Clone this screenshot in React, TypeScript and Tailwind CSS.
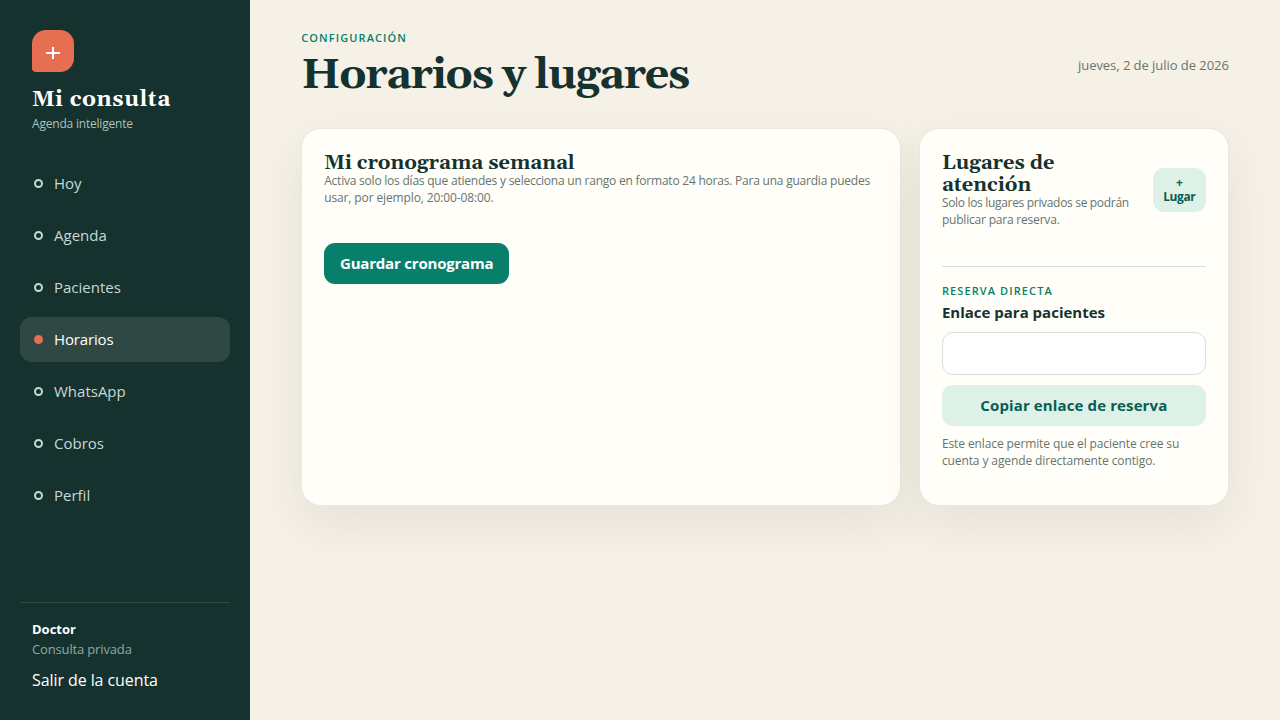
import { useState } from 'react';
import clsx from 'clsx';

const NAV_ITEMS = ['Hoy', 'Agenda', 'Pacientes', 'Horarios', 'WhatsApp', 'Cobros', 'Perfil'];

const serif = "font-['Georgia','Gelasio','DejaVu_Serif',serif]";
const card =
  'rounded-[20px] border border-[#e8e8df] bg-[#fffef9] p-[22px] shadow-[0_18px_50px_rgba(22,50,46,0.08)]';

function Sidebar({ active, onSelect }: { active: string; onSelect: (item: string) => void }) {
  return (
    <aside className="flex w-[250px] shrink-0 flex-col bg-[#16322e] px-5 py-[30px] text-white">
      <div className="px-3">
        <div className="grid size-[42px] place-items-center rounded-[14px] rounded-bl-[4px] bg-[#e76f51]">
          <svg width="14" height="14" viewBox="0 0 14 14" className="mt-[3px]">
            <path d="M7 1v12M0 7h14" stroke="white" strokeWidth="2" />
          </svg>
        </div>
        <div
          className={clsx(
            serif,
            'mt-[14px] text-[22px] leading-[29px] font-bold tracking-[0.6px] whitespace-nowrap',
          )}
        >
          Mi consulta
        </div>
        <div className="text-[12px] leading-[18px] tracking-[-0.2px] text-[#a9c2bb]">
          Agenda inteligente
        </div>
      </div>

      <nav className="mt-[28px] grid gap-[7px]">
        {NAV_ITEMS.map((item) => (
          <button
            key={item}
            onClick={() => onSelect(item)}
            className={clsx(
              'flex h-[45px] items-center gap-[11px] rounded-[12px] px-[14px] text-left text-[15px]',
              item === active ? 'bg-white/11 font-medium tracking-[-0.15px] text-white' : 'text-[#c8d8d4]',
            )}
          >
            <span
              className={clsx(
                'size-[9px] rounded-full border-2',
                item === active ? 'border-[#e76f51] bg-[#e76f51]' : 'border-current',
              )}
            />
            {item}
          </button>
        ))}
      </nav>

      <div className="mt-auto border-t border-[#2d4c46] px-3 pt-[17px]">
        <div className="text-[13px] leading-[18px] font-bold">Doctor</div>
        <div className="mt-[2px] text-[13px] leading-[18px] tracking-[-0.15px] text-[#8fa9a3]">
          Consulta privada
        </div>
        <button className="mt-[12px] block text-[16px] leading-[20px] tracking-[-0.08px]">
          Salir de la cuenta
        </button>
      </div>
    </aside>
  );
}

function Eyebrow({ children }: { children: string }) {
  return (
    <div className="text-[11px] leading-[15px] font-semibold tracking-[1.1px] text-[#087f6b] uppercase">
      {children}
    </div>
  );
}

/** Enlace público de reserva */
function BookingLink() {
  const [link, setLink] = useState('');

  return (
    <div className="mt-[38px] border-t border-[#d9dfd9] pt-[16px]">
      <Eyebrow>Reserva directa</Eyebrow>
      <div className="mt-1 text-[15px] leading-[20px] font-bold text-[#16322e]">
        Enlace para pacientes
      </div>
      <input
        value={link}
        onChange={(e) => setLink(e.target.value)}
        className="mt-[10px] block h-[43px] w-full rounded-[11px] border border-[#d9dfd9] bg-white px-3"
      />
      <button
        onClick={() => navigator.clipboard.writeText(link)}
        className="mt-[10px] h-[41px] w-full rounded-[11px] bg-[#def1e8] text-[15px] font-bold tracking-[0.12px] text-[#075e50]"
      >
        Copiar enlace de reserva
      </button>
      <p className="mt-[9px] text-[12px] leading-[17px] tracking-[-0.11px] text-[#66756f]">
        Este enlace permite que el paciente cree su
        <br />
        cuenta y agende directamente contigo.
      </p>
    </div>
  );
}

export default function App() {
  const [active, setActive] = useState('Horarios');

  return (
    <div className="flex min-h-screen bg-[#f6f1e7] font-['Trebuchet_MS','Open_Sans',sans-serif] text-[#16322e]">
      <Sidebar active={active} onSelect={setActive} />

      <main className="flex-1 px-[51.2px] pt-[30px]">
        <header className="flex items-start justify-between">
          <div>
            <Eyebrow>Configuración</Eyebrow>
            <h1
              className={clsx(
                serif,
                'mt-[7px] text-[43px] leading-[48px] font-bold tracking-[-1.29px]',
              )}
            >
              Horarios y lugares
            </h1>
          </div>
          <span className="mt-[25px] text-[13px] leading-[20px] tracking-[-0.05px] text-[#66756f]">
            jueves, 2 de julio de 2026
          </span>
        </header>

        <div className="mt-[28px] grid h-[378px] grid-cols-[1fr_309.9px] gap-[18px]">
          <section className={card}>
            <h2 className={clsx(serif, 'pt-px text-[20px] leading-[22px] font-bold')}>
              Mi cronograma semanal
            </h2>
            <p className="-mt-[2px] text-[12px] leading-[17px] tracking-[-0.22px] text-[#66756f]">
              Activa solo los días que atiendes y selecciona un rango en formato 24 horas. Para una
              guardia puedes
              <br />
              <span className="tracking-[-0.12px]">usar, por ejemplo, 20:00-08:00.</span>
            </p>
            <button className="mt-[37px] h-[41px] w-[185px] rounded-[11px] bg-[#087f6b] text-[15px] font-bold tracking-[-0.2px] text-white">
              Guardar cronograma
            </button>
          </section>

          <section className={card}>
            <div className="flex items-center justify-between">
              <div className="w-[195px]">
                <h2 className={clsx(serif, 'pt-px text-[20px] leading-[22px] font-bold')}>
                  Lugares de
                  <br />
                  atención
                </h2>
                <p className="-mt-[2px] text-[12px] leading-[17px] text-[#66756f]">
                  <span className="tracking-[-0.32px]">Solo los lugares privados se podrán</span>
                  <br />
                  <span className="tracking-[-0.2px]">publicar para reserva.</span>
                </p>
              </div>
              <button className="mt-px h-[44px] w-[53px] rounded-[11px] bg-[#def1e8] text-[12px] leading-[14px] font-bold tracking-[-0.4px] text-[#075e50]">
                +<br />
                Lugar
              </button>
            </div>
            <BookingLink />
          </section>
        </div>
      </main>
    </div>
  );
}
